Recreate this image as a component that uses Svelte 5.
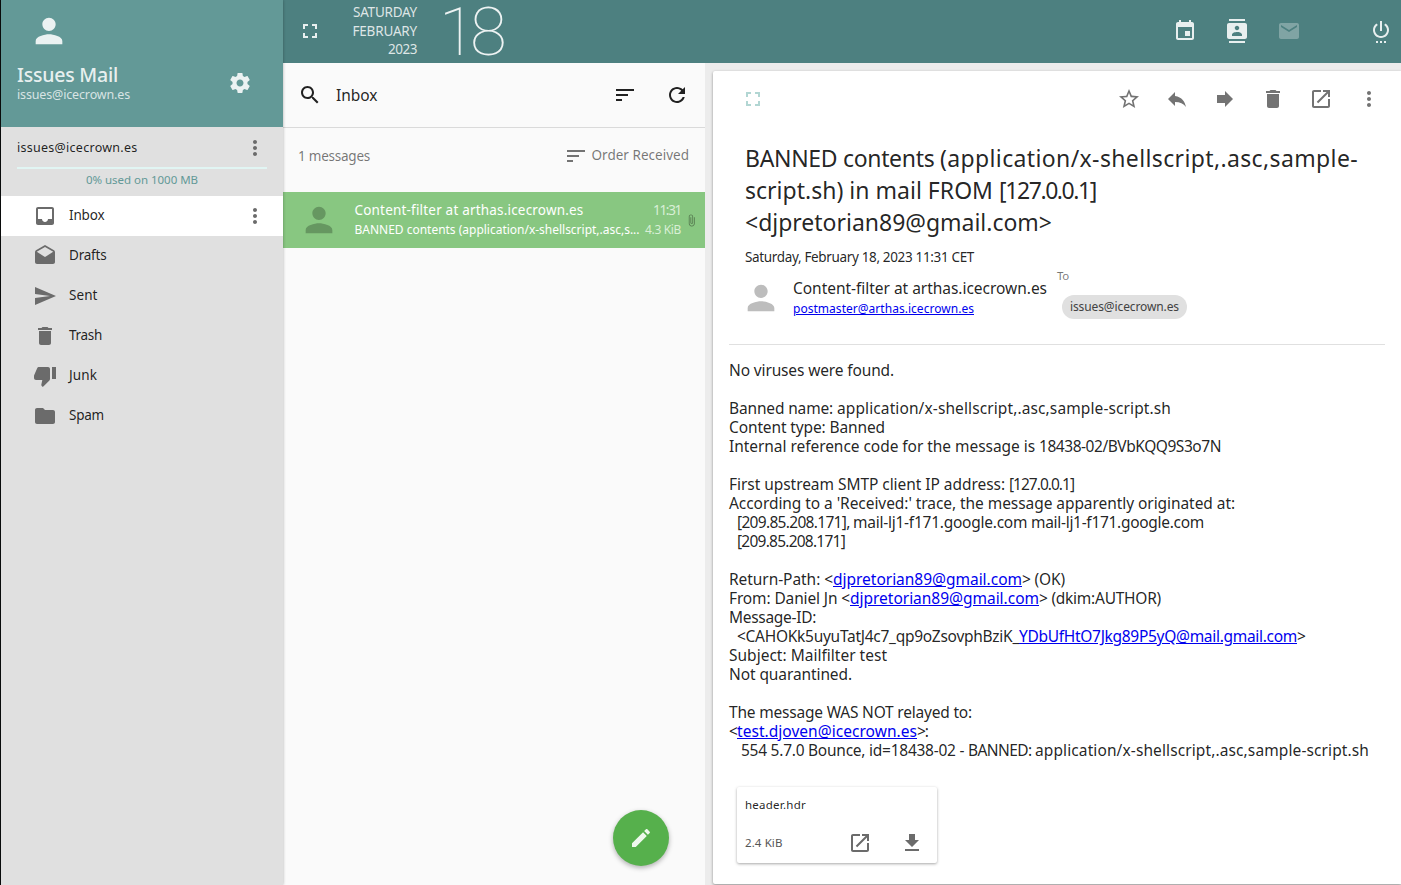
<script>
  const icons = {
    person: 'M12 12c2.21 0 4-1.79 4-4s-1.79-4-4-4-4 1.79-4 4 1.79 4 4 4zm0 2c-2.67 0-8 1.34-8 4v2h16v-2c0-2.66-5.33-4-8-4z',
    gear: 'M19.43 12.98c.04-.32.07-.64.07-.98s-.03-.66-.07-.98l2.11-1.65c.19-.15.24-.42.12-.64l-2-3.46c-.12-.22-.39-.3-.61-.22l-2.49 1c-.52-.4-1.08-.73-1.69-.98l-.38-2.65C14.46 2.18 14.25 2 14 2h-4c-.25 0-.46.18-.49.42l-.38 2.65c-.61.25-1.17.59-1.69.98l-2.49-1c-.23-.09-.49 0-.61.22l-2 3.46c-.13.22-.07.49.12.64l2.11 1.65c-.04.32-.07.65-.07.98s.03.66.07.98l-2.11 1.65c-.19.15-.24.42-.12.64l2 3.46c.12.22.39.3.61.22l2.49-1c.52.4 1.08.73 1.69.98l.38 2.65c.03.24.24.42.49.42h4c.25 0 .46-.18.49-.42l.38-2.65c.61-.25 1.17-.59 1.69-.98l2.49 1c.23.09.49 0 .61-.22l2-3.46c.12-.22.07-.49-.12-.64l-2.11-1.65zM12 15.5c-1.93 0-3.5-1.57-3.5-3.5s1.57-3.5 3.5-3.5 3.5 1.57 3.5 3.5-1.57 3.5-3.5 3.5z',
    more: 'M12 8c1.1 0 2-.9 2-2s-.9-2-2-2-2 .9-2 2 .9 2 2 2zm0 2c-1.1 0-2 .9-2 2s.9 2 2 2 2-.9 2-2-.9-2-2-2zm0 6c-1.1 0-2 .9-2 2s.9 2 2 2 2-.9 2-2-.9-2-2-2z',
    inbox: 'M19 3H4.99c-1.11 0-1.98.89-1.98 2L3 19c0 1.1.88 2 1.99 2H19c1.1 0 2-.9 2-2V5c0-1.11-.9-2-2-2zm0 12h-4c0 1.66-1.35 3-3 3s-3-1.34-3-3H4.99V5H19v10z',
    drafts: 'M21.99 8c0-.72-.37-1.35-.94-1.7L12 1 2.95 6.3C2.38 6.65 2 7.28 2 8v10c0 1.1.9 2 2 2h16c1.1 0 2-.9 2-2l-.01-10zM12 13L3.74 7.84 12 3l8.26 4.84L12 13z',
    send: 'M2.01 21L23 12 2.01 3 2 10l15 2-15 2z',
    trash: 'M6 19c0 1.1.9 2 2 2h8c1.1 0 2-.9 2-2V7H6v12zM19 4h-3.5l-1-1h-5l-1 1H5v2h14V4z',
    junk: 'M15 3H6c-.83 0-1.54.5-1.84 1.22l-3.02 7.05c-.09.23-.14.47-.14.73v1.91l.01.01L1 14c0 1.1.9 2 2 2h6.31l-.95 4.57-.03.32c0 .41.17.79.44 1.06L9.83 23l6.59-6.59c.36-.36.58-.86.58-1.41V5c0-1.1-.9-2-2-2zm4 0v12h4V3h-4z',
    folder: 'M10 4H4c-1.1 0-1.99.9-1.99 2L2 18c0 1.1.9 2 2 2h16c1.1 0 2-.9 2-2V8c0-1.1-.9-2-2-2h-8l-2-2z',
    full: 'M7 14H5v5h5v-2H7v-3zm-2-4h2V7h3V5H5v5zm12 7h-3v2h5v-5h-2v3zM14 5v2h3v3h2V5h-5z',
    event: 'M17 12h-5v5h5v-5zM16 1v2H8V1H6v2H5c-1.11 0-1.99.9-1.99 2L3 19c0 1.1.89 2 2 2h14c1.1 0 2-.9 2-2V5c0-1.1-.9-2-2-2h-1V1h-2zm3 18H5V8h14v11z',
    contacts: 'M20 0H4v2h16V0zM4 24h16v-2H4v2zM20 4H4c-1.1 0-2 .9-2 2v12c0 1.1.9 2 2 2h16c1.1 0 2-.9 2-2V6c0-1.1-.9-2-2-2zm-8 2.75c1.24 0 2.25 1.01 2.25 2.25s-1.01 2.25-2.25 2.25S9.75 10.24 9.75 9 10.76 6.75 12 6.75zM17 17H7v-1.5c0-1.67 3.33-2.5 5-2.5s5 .83 5 2.5V17z',
    mail: 'M20 4H4c-1.1 0-1.99.9-1.99 2L2 18c0 1.1.9 2 2 2h16c1.1 0 2-.9 2-2V6c0-1.1-.9-2-2-2zm0 4l-8 5-8-5V6l8 5 8-5v2z',
    power: 'M7 24h2v-2H7v2zm4 0h2v-2h-2v2zm2-22h-2v10h2V2zm3.56 2.44l-1.45 1.45C16.84 6.94 18 8.83 18 11c0 3.31-2.69 6-6 6s-6-2.69-6-6c0-2.17 1.16-4.06 2.88-5.12L7.44 4.44C5.36 5.88 4 8.28 4 11c0 4.42 3.58 8 8 8s8-3.58 8-8c0-2.72-1.36-5.12-3.44-6.56zM15 24h2v-2h-2v2z',
    search: 'M15.5 14h-.79l-.28-.27C15.41 12.59 16 11.11 16 9.5 16 5.91 13.09 3 9.5 3S3 5.91 3 9.5 5.91 16 9.5 16c1.61 0 3.09-.59 4.23-1.57l.27.28v.79l5 4.99L20.49 19l-4.99-5zm-6 0C7.01 14 5 11.99 5 9.5S7.01 5 9.5 5 14 7.01 14 9.5 11.99 14 9.5 14z',
    sort: 'M3 18h6v-2H3v2zM3 6v2h18V6H3zm0 7h12v-2H3v2z',
    refresh: 'M17.65 6.35C16.2 4.9 14.21 4 12 4c-4.42 0-7.99 3.58-7.99 8s3.57 8 7.99 8c3.73 0 6.84-2.55 7.73-6h-2.08c-.82 2.33-3.04 4-5.65 4-3.31 0-6-2.69-6-6s2.69-6 6-6c1.66 0 3.14.69 4.22 1.78L13 11h7V4l-2.35 2.35z',
    attach: 'M16.5 6v11.5c0 2.21-1.79 4-4 4s-4-1.79-4-4V5c0-1.38 1.12-2.5 2.5-2.5s2.5 1.12 2.5 2.5v10.5c0 .55-.45 1-1 1s-1-.45-1-1V6H10v9.5c0 1.38 1.12 2.5 2.5 2.5s2.5-1.12 2.5-2.5V5c0-2.21-1.79-4-4-4S7 2.79 7 5v12.5c0 3.04 2.46 5.5 5.5 5.5s5.5-2.46 5.5-5.5V6h-1.5z',
    star: 'M22 9.24l-7.19-.62L12 2 9.19 8.63 2 9.24l5.46 4.73L5.82 21 12 17.27 18.18 21l-1.63-7.03L22 9.24zM12 15.4l-3.76 2.27 1-4.28-3.32-2.88 4.38-.38L12 6.1l1.71 4.04 4.38.38-3.32 2.88 1 4.28L12 15.4z',
    reply: 'M10 9V5l-7 7 7 7v-4.1c5 0 8.5 1.6 11 5.1-1-5-4-10-11-11z',
    forward: 'M12 8V4l8 8-8 8v-4H4V8z',
    open: 'M19 19H5V5h7V3H5c-1.11 0-2 .9-2 2v14c0 1.1.89 2 2 2h14c1.1 0 2-.9 2-2v-7h-2v7zM14 3v2h3.59l-9.83 9.83 1.41 1.41L19 6.41V10h2V3h-7z',
    pencil: 'M3 17.25V21h3.75L17.81 9.94l-3.75-3.75L3 17.25zM20.71 7.04c.39-.39.39-1.02 0-1.41l-2.34-2.34c-.39-.39-1.02-.39-1.41 0l-1.83 1.83 3.75 3.75 1.83-1.83z',
    download: 'M19 9h-4V3H9v6H5l7 7 7-7zM5 18v2h14v-2H5z'
  };

  const folders = [
    { name: 'Inbox', icon: 'inbox', w: 35.5 },
    { name: 'Drafts', icon: 'drafts', w: 37.5 },
    { name: 'Sent', icon: 'send', w: 28.5 },
    { name: 'Trash', icon: 'trash', w: 33 },
    { name: 'Junk', icon: 'junk', w: 28 },
    { name: 'Spam', icon: 'folder', w: 35 }
  ];

  const actions = ['star', 'reply', 'forward', 'trash', 'open', 'more'];

  // Each line: segments of [text, width]
  const subject = [
    [['BANNED contents ', 195], ['(application/x-shellscript,.asc,sample-', 418]],
    [['script.sh) in mail FROM ', 254], ['[127.0.0.1]', 97]],
    [['<djpretorian89@gmail.com>', 307]]
  ];

  // Each line: indent in px and segments of [text, width, isLink]
  const body = [
    [0, ['No viruses were found.', 165]],
    [0],
    [0, ['Banned name: ', 108], ['application/x-shellscript,.asc,sample-script.sh', 334]],
    [0, ['Content type: Banned', 156]],
    [0, ['Internal reference code for the message is ', 310], ['18438-02/BVbKQQ9S3o7N', 182]],
    [0],
    [0, ['First upstream SMTP client IP address: ', 280], ['[127.0.0.1]', 65]],
    [0, ["According to a 'Received:' trace, the message apparently originated at:", 506]],
    [8, ['[209.85.208.171], ', 116], ['mail-lj1-f171.google.com ', 178], ['mail-lj1-f171.google.com', 173]],
    [8, ['[209.85.208.171]', 108]],
    [0],
    [0, ['Return-Path: <', 104], ['djpretorian89@gmail.com', 189, true], ['> (OK)', 43]],
    [0, ['From: Daniel Jn <', 121], ['djpretorian89@gmail.com', 189, true], ['> (dkim:AUTHOR)', 122]],
    [0, ['Message-ID:', 87]],
    [8, ['<CAHOKk5uyuTatJ4c7_qp9oZsovphBziK_', 282], ['YDbUfHtO7Jkg89P5yQ@mail.gmail.com', 278, true], ['>', 8]],
    [0, ['Subject: Mailfilter test', 158]],
    [0, ['Not quarantined.', 123]],
    [0],
    [0, ['The message WAS NOT relayed to:', 243]],
    [0, ['<', 8], ['test.djoven@icecrown.es', 180, true], ['>:', 11]],
    [12, ['554 5.7.0 Bounce, id=18438-02 - ', 227], ['BANNED: ', 67], ['application/x-shellscript,.asc,sample-script.sh', 334]]
  ];

  // Tracks the text in or out so that it sets to the given measure
  function fit(node, width) {
    const natural = node.getBoundingClientRect().width;
    node.style.letterSpacing = (width - natural) / node.textContent.length + 'px';
  }
</script>

{#snippet icon(name, size = 24)}
  <svg width={size} height={size} viewBox="0 0 24 24" fill="currentColor"><path d={icons[name]} /></svg>
{/snippet}

<div class="app">
  <aside>
    <header class="profile">
      <div class="avatar">{@render icon('person', 40)}</div>
      <div class="who">
        <div>
          <h1><span class="t" use:fit={101}>Issues Mail</span></h1>
          <p><span class="t" use:fit={113}>issues@icecrown.es</span></p>
        </div>
        {@render icon('gear')}
      </div>
    </header>
    <section class="account">
      <div class="accrow"><span class="t" use:fit={120.5}>issues@icecrown.es</span>{@render icon('more')}</div>
      <div class="quota"></div>
      <div class="used"><span class="t" use:fit={112}>0% used on 1000 MB</span></div>
    </section>
    <nav>
      {#each folders as f, i}
        <div class="folder" class:active={i === 0}>
          {@render icon(f.icon)}
          <span class="label"><span class="t" use:fit={f.w}>{f.name}</span></span>
          {#if i === 0}{@render icon('more')}{/if}
        </div>
      {/each}
    </nav>
  </aside>

  <div class="main">
    <header class="topbar">
      {@render icon('full')}
      <div class="date">
        <div><span class="t" use:fit={64}>SATURDAY</span></div>
        <div><span class="t" use:fit={64.5}>FEBRUARY</span></div>
        <div><span class="t" use:fit={29}>2023</span></div>
      </div>
      <div class="day"><span class="t" use:fit={62}>18</span></div>
      <div class="modules">
        {@render icon('event')}
        {@render icon('contacts')}
        <span class="dim">{@render icon('mail')}</span>
        <span class="off">{@render icon('power')}</span>
      </div>
    </header>

    <div class="content">
      <section class="list">
        <div class="searchbar">
          {@render icon('search')}
          <span class="title"><span class="t" use:fit={41.5}>Inbox</span></span>
          {@render icon('sort')}
          {@render icon('refresh')}
        </div>
        <div class="order">
          <span class="t count" use:fit={72}>1 messages</span>
          <span class="by">{@render icon('sort')}<span class="t" use:fit={97.5}>Order Received</span></span>
        </div>
        <article>
          <div class="ava">{@render icon('person', 40)}</div>
          <div class="msg">
            <div class="from"><span class="t" use:fit={229}>Content-filter at arthas.icecrown.es</span><span class="t soft" use:fit={28}>11:31</span></div>
            <div class="subj"><span class="t" use:fit={285}>BANNED contents (application/x-shellscript,.asc,s...</span><span class="t soft" use:fit={36}>4.3 KiB</span></div>
          </div>
          <div class="clip">{@render icon('attach', 13)}</div>
        </article>
        <button class="fab" aria-label="Write">{@render icon('pencil')}</button>
      </section>

      <section class="detail">
        <div class="card">
          <div class="toolbar">
            <span class="expand">{@render icon('full')}</span>
            {#each actions as a}{@render icon(a)}{/each}
          </div>
          <h2>
            {#each subject as parts}
              <span class="row">
                {#each parts as [text, w]}<span class="t" use:fit={w}>{text}</span>{/each}
              </span>
            {/each}
          </h2>
          <div class="when"><span class="t" use:fit={229}>Saturday, February 18, 2023 11:31 CET</span></div>
          <div class="people">
            <div class="face">{@render icon('person', 40)}</div>
            <div class="sender">
              <div><span class="t" use:fit={254}>Content-filter at arthas.icecrown.es</span></div>
              <a href="#sender"><span class="t" use:fit={181}>postmaster@arthas.icecrown.es</span></a>
            </div>
            <div class="to">
              <div><span class="t" use:fit={12}>To</span></div>
              <span class="chip"><span class="t" use:fit={109}>issues@icecrown.es</span></span>
            </div>
          </div>
          <div class="body">
            {#each body as [indent, ...parts]}
              <div class="line" style:padding-left="{indent}px">
                {#each parts as [text, w, link]}<span class="t" class:link use:fit={w}>{text}</span>{/each}
              </div>
            {/each}
          </div>
          <div class="file">
            <span class="t fname" use:fit={61}>header.hdr</span>
            <div class="fmeta">
              <span class="size"><span class="t" use:fit={37.5}>2.4 KiB</span></span>
              {@render icon('open')}
              {@render icon('download')}
            </div>
          </div>
        </div>
      </section>
    </div>
  </div>
</div>

<style>
  :global(body) { margin: 0; overflow: hidden; background: #000; }
  .app {
    display: flex; box-sizing: border-box; width: 1401px; height: 885px; padding-left: 1px;
    font-family: "Noto Sans", "Open Sans", sans-serif; font-size: 13.5px; color: rgba(0, 0, 0, .87);
    overflow: hidden; background: #0b0d0d;
  }
  svg { display: block; flex: none; }
  h1, h2, p { margin: 0; font-weight: 400; }
  .t { display: inline-block; white-space: pre; flex: none; }

  aside { width: 282px; flex: none; background: #e0e0e0; box-shadow: 0 0 3px rgba(0, 0, 0, .3); z-index: 1; }
  .profile { height: 127px; background: #639997; color: rgba(255, 255, 255, .87); }
  .avatar { padding: 11px 0 0 28px; }
  .who { display: flex; justify-content: space-between; padding: 11px 31px 0 16px; }
  .who > :global(svg) { margin-top: 9px; }
  h1 { font-size: 19.5px; font-weight: 500; line-height: 26px; }
  .profile p { font-size: 12.5px; line-height: 13px; color: rgba(255, 255, 255, .75); }
  .account { height: 69px; color: rgba(0, 0, 0, .87); }
  .accrow { display: flex; justify-content: space-between; align-items: center; height: 40px; padding: 0 16.5px 0 16px; font-size: 12.5px; }
  .accrow svg, .folder > svg { color: #6b6b6b; }
  .account svg { margin-top: 2px; }
  .quota { height: 2px; margin: 0 16px; background: #e1f5f3; }
  .used { text-align: center; font-size: 11.5px; line-height: 22px; color: #639997; }
  .folder { display: flex; align-items: center; height: 40px; padding: 0 16.5px 0 32px; box-sizing: border-box; }
  .folder.active { background: #fff; }
  .label { flex: 1; padding-left: 12px; line-height: 38px; height: 40px; }

  .main { flex: 1; display: flex; flex-direction: column; min-width: 0; }
  .topbar { display: flex; height: 63px; flex: none; background: #4d8080; color: rgba(255, 255, 255, .87); box-sizing: border-box; padding-left: 15px; }
  .topbar > svg { margin-top: 19px; }
  .date { width: 95px; text-align: right; line-height: 18.5px; padding-top: 3px; color: rgba(255, 255, 255, .82); }
  .day { font: 100 67px/64px Roboto, sans-serif; padding-left: 22px; color: rgba(255, 255, 255, .9); height: 63px; }
  .modules { margin-left: auto; display: flex; gap: 28px; padding-top: 19px; margin-right: 8px; }
  .dim { opacity: .33; }
  .off { padding-left: 40px; }

  .content { flex: 1; display: flex; min-height: 0; }
  .list { position: relative; width: 422px; flex: none; background: #fafafa; }
  .searchbar { display: flex; align-items: center; height: 64px; padding: 0 16px 0 15px; border-bottom: 1px solid #dadada; box-sizing: content-box; }
  .title { flex: 1; padding-left: 14px; font-size: 15.5px; }
  .searchbar svg:last-child { margin-left: 28px; }
  .order { display: flex; justify-content: space-between; height: 64px; padding: 0 16px 0 15px; color: rgba(0, 0, 0, .54); align-items: center; box-sizing: border-box; padding-bottom: 8px; }
  .by { display: flex; align-items: center; gap: 4px; }
  .by .t { margin-top: -2px; }
  article { display: flex; height: 56px; background: #88c781; color: #fff; }
  .ava { padding: 8px 0 0 16px; color: #669761; }
  .msg { width: 326.5px; padding: 9px 0 0 15.5px; }
  .from, .subj { display: flex; justify-content: space-between; line-height: 19px; }
  .subj { font-size: 12px; line-height: 20px; }
  .soft { color: #d9efd6; }
  .clip { padding: 22px 0 0 4px; color: #55794f; }
  .fab {
    position: absolute; left: 330px; top: 747px; width: 56px; height: 56px; border: 0; border-radius: 50%;
    display: grid; place-items: center; background: #56b04c; color: #eef8ed; box-shadow: 0 2px 5px rgba(0, 0, 0, .3); padding: 0;
  }

  .detail { flex: 1; background: #ececec; padding: 8px 0 1px 8px; min-width: 0; }
  .card { height: 813px; background: #fff; border-radius: 2px 0 0 2px; box-shadow: 0 1px 3px rgba(0, 0, 0, .4); box-sizing: border-box; padding: 0 0 0 16px; }
  .toolbar { display: flex; gap: 24px; padding: 16px 20px 0 12px; color: #737373; height: 40px; }
  .expand { color: #b2d6d3; margin-right: auto; }
  h2 { font-size: 23px; line-height: 32px; padding: 15px 0 0 16px; }
  .row { display: flex; }
  .when { padding-left: 16px; line-height: 20px; margin-top: 9px; }
  .people { display: flex; height: 77px; border-bottom: 1px solid #e0e0e0; margin-right: 16px; }
  .face { padding: 11px 0 0 12px; color: #bdbdbd; }
  .sender { padding: 10px 0 0 12px; font-size: 15.5px; line-height: 22px; width: 254px; }
  .sender a { display: block; font-size: 12px; line-height: 20px; color: #0000ee; text-decoration: none; }
  .sender a .t, .link { text-decoration: underline; }
  .to { padding-left: 10px; font-size: 11.5px; line-height: 17px; color: rgba(0, 0, 0, .54); }
  .chip { display: block; height: 24px; margin: 11px 0 0 5px; padding: 0 8px; border-radius: 12px; background: #e0e0e0; color: #424242; font-size: 12px; line-height: 24px; }
  .body { padding-top: 16px; font-size: 15.5px; line-height: 19px; }
  .line { height: 19px; white-space: nowrap; }
  .link { color: #0000ee; }
  .file { width: 200px; height: 76px; margin: 27px 0 0 8px; box-shadow: 0 1px 3px rgba(0, 0, 0, .35); border-radius: 2px; box-sizing: border-box; padding: 8px 13.5px 0 8px; font-size: 11.5px; line-height: 19px; }
  .fmeta { display: flex; align-items: center; color: #6b6b6b; margin-top: 17px; }
  .size { flex: 1; color: #555; margin-top: -2px; }
  .fmeta svg:last-child { margin-left: 28px; }
</style>
